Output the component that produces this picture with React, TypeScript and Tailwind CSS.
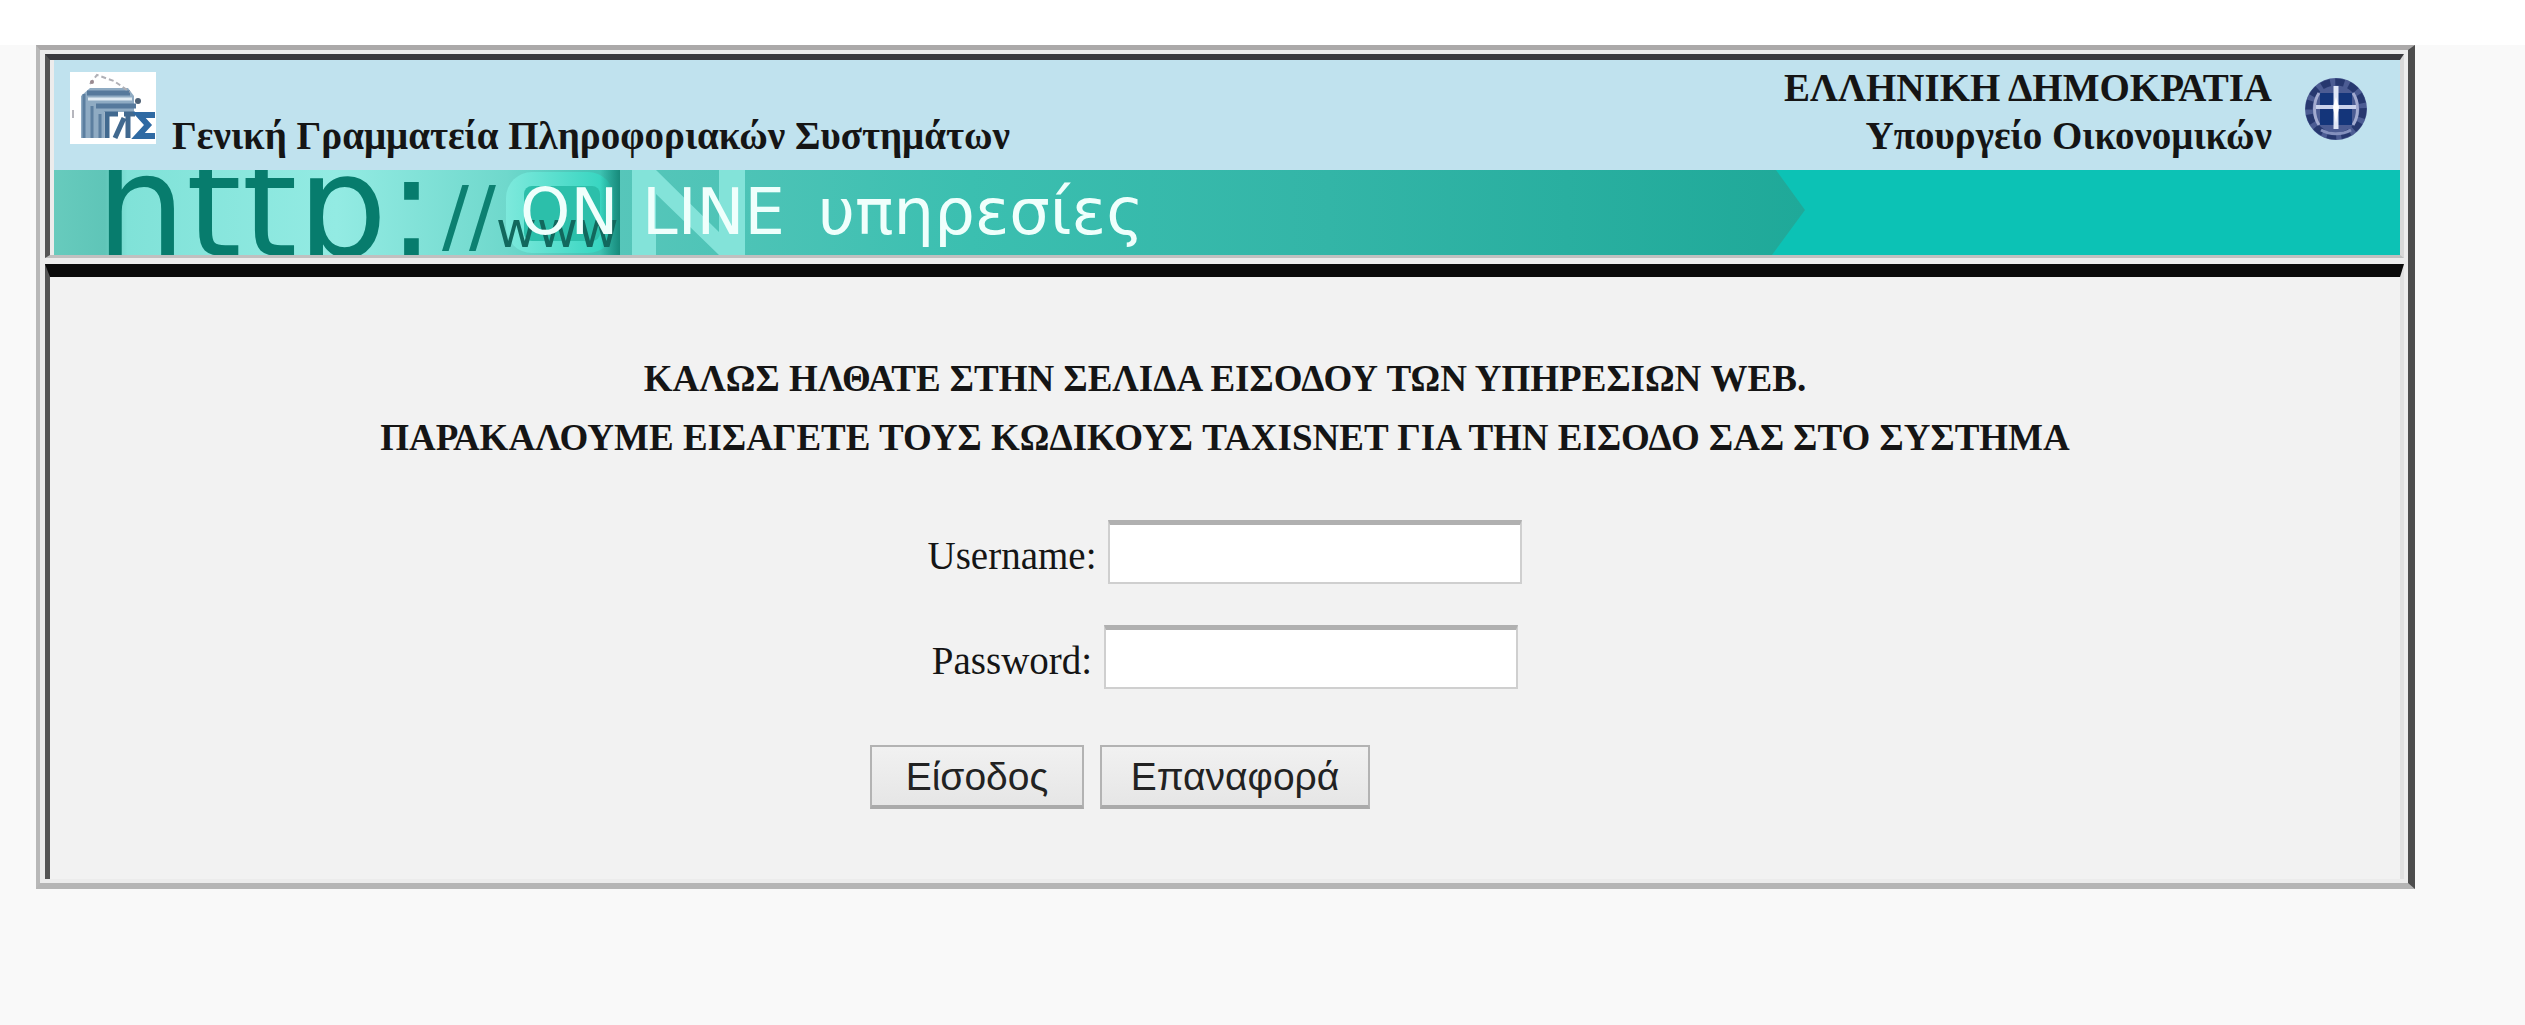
function AgencyLogo() {
  return (
    <svg className="h-[72px] w-[86px] shrink-0 bg-white" viewBox="0 0 86 72" role="img" aria-label="ΓΓΠΣ">
      <path d="M11 66V24L20 16H58L64 24V40H34V66Z" fill="#8fabc3" />
      <path d="M17 21H60M26 34H66" stroke="#56799c" strokeWidth="5" />
      <path d="M18 27H62" stroke="#dfeaf2" strokeWidth="3" />
      <path d="M14 22V66M22 34V66M30 42V66" stroke="#5c7fa0" strokeWidth="3" />
      <path d="M20 12L27 3L44 9L60 20" stroke="#b0b0b6" strokeWidth="2" strokeDasharray="5 3" fill="none" />
      <circle cx="68" cy="29" r="3" fill="#4e6175" />
      <circle cx="22" cy="10" r="2" fill="#9a8a90" />
      <path d="M3 38V46" stroke="#b6b6bd" strokeWidth="2" />
      <path d="M37 66V42H48M45 66L54 46M58 42V66M54 42H65" stroke="#41698f" strokeWidth="5" fill="none" />
      <path d="M85 43H69L78 53L68 64H85" stroke="#2f6aa3" strokeWidth="6" fill="none" />
    </svg>
  );
}

function StateEmblem() {
  return (
    <svg className="mt-[5px] size-16 shrink-0" viewBox="0 0 64 64" role="img" aria-label="Εθνόσημο">
      <circle cx="32" cy="32" r="31" fill="#4c5c93" />
      <circle cx="32" cy="32" r="27" fill="none" stroke="#27386f" strokeWidth="7" strokeDasharray="9 5" />
      <path d="M16 16H48V48H16Z" fill="#14357a" />
      <path d="M15 16C9 25 9 39 15 48M49 16C55 25 55 39 49 48" fill="none" stroke="#a3abd0" strokeWidth="3" />
      <path d="M17 53C26 58 38 58 47 53" fill="none" stroke="#8490bd" strokeWidth="3" />
      <path d="M32 9V52" stroke="#dfe6f6" strokeWidth="5" />
      <path d="M12 30H52" stroke="#c9d2ec" strokeWidth="4" />
      <path d="M32 20L35 30L32 46L29 30Z" fill="#ffffff" />
    </svg>
  );
}

function BannerArt() {
  return (
    <svg className="absolute top-0 left-0 h-full w-[1752px]" viewBox="0 0 1752 85" aria-hidden="true">
      <defs>
        <linearGradient id="glow" x1="0" x2="1">
          <stop offset="0" stopColor="#67cbbd" />
          <stop offset="0.09" stopColor="#5fc5b8" />
          <stop offset="0.13" stopColor="#80e2d8" />
          <stop offset="0.5" stopColor="#93ebe3" />
          <stop offset="0.8" stopColor="#6fd8cc" />
          <stop offset="1" stopColor="#35bfae" />
        </linearGradient>
        <linearGradient id="bubble" x1="0" x2="1">
          <stop offset="0" stopColor="#7de9dc" />
          <stop offset="1" stopColor="#2fd3bd" />
        </linearGradient>
        <linearGradient id="edge" x1="0" x2="1">
          <stop offset="0" stopColor="#178a7b" stopOpacity="0" />
          <stop offset="1" stopColor="#178a7b" />
        </linearGradient>
        <linearGradient id="sweep" x1="0" x2="1">
          <stop offset="0" stopColor="#57c6ba" />
          <stop offset="0.3" stopColor="#3bbfb0" />
          <stop offset="0.6" stopColor="#33b5a7" />
          <stop offset="1" stopColor="#1fa999" />
        </linearGradient>
      </defs>
      <path d="M560 0H1722L1751 40L1718 85H560Z" fill="url(#sweep)" />
      <rect width="566" height="85" fill="url(#glow)" />
      <rect x="452" y="2" width="108" height="81" rx="26" fill="url(#bubble)" />
      <rect x="470" y="16" width="76" height="55" rx="8" fill="#2cbfaa" />
      <rect x="546" width="20" height="85" fill="url(#edge)" />
      <text x="42" y="86" fontFamily="DejaVu Sans" fontSize="142" fill="#077c6d">http:</text>
      <text x="388" y="74" fontFamily="DejaVu Sans" fontSize="80" fill="#0c8071">//</text>
      <text x="442" y="77" fontFamily="DejaVu Sans" fontSize="50" fill="#12685d">www</text>
      <path d="M578 0H602L665 62V0H691V85H665L602 24V85H578Z" fill="#83e3d9" />
    </svg>
  );
}

const field =
  "h-16 w-[414px] border-2 border-t-[5px] border-[#cfcfcf] border-t-[#b0b0b0] bg-white px-2 text-[36px] outline-none";
const button =
  "h-16 border-2 border-b-4 border-[#b3b3b3] border-b-[#aaaaaa] bg-linear-to-b from-[#f1f1f1] to-[#e6e6e6] font-['Liberation_Sans',sans-serif] text-[39px] leading-none text-[#222]";

export default function App() {
  return (
    <div className="min-h-screen bg-[#f9f9f9] font-['Liberation_Serif',serif] text-[#151515]">
      <div className="h-[45px] bg-white" />
      <div className="mr-[110px] ml-9 border-t-[5px] border-r-[7px] border-b-[6px] border-l-4 border-t-[#aba9a9] border-r-[#4d4d4d] border-b-[#b5b5b5] border-l-[#b8b8b8] bg-[#ececec] pt-1 pr-1 pb-1 pl-[5px]">
        <header className="border-t-[6px] border-r-4 border-b-[3px] border-l-[5px] border-t-[#3a3a3e] border-r-[#d8d8d8] border-b-[#c0c0c0] border-l-[#555] pl-1">
          <div className="flex h-[110px] items-start bg-[#c0e2ee] pt-3 pr-8 pl-4">
            <AgencyLogo />
            <p className="mt-10 ml-4 text-[39px] leading-[48px] font-bold whitespace-nowrap">
              Γενική Γραμματεία Πληροφοριακών Συστημάτων
            </p>
            <div className="-mt-2 ml-auto pr-8 text-right text-[39px] leading-[48px] font-bold whitespace-nowrap">
              <p>ΕΛΛΗΝΙΚΗ ΔΗΜΟΚΡΑΤΙΑ</p>
              <p>Υπουργείο Οικονομικών</p>
            </div>
            <StateEmblem />
          </div>
          <div className="relative h-[85px] bg-[#0cc2b5]">
            <BannerArt />
            <h1 className="relative flex pl-[466px] font-['DejaVu_Sans',sans-serif] text-[64px] leading-[85px] font-normal text-[#effffc]">
              <span className="w-[122px]">ON</span>
              <span className="w-[176px]">LINE</span>
              <span>υπηρεσίες</span>
            </h1>
          </div>
        </header>
        <main className="mt-[6px] flex flex-col items-center border-t-[13px] border-r-4 border-l-[5px] border-t-[#0b0b0b] border-r-[#e0e0e0] border-l-[#555] bg-[#f2f2f2] pt-[72px] pb-[70px]">
          <div className="text-center text-[37px] leading-[59px] font-bold whitespace-nowrap">
            <p>ΚΑΛΩΣ ΗΛΘΑΤΕ ΣΤΗΝ ΣΕΛΙΔΑ ΕΙΣΟΔΟΥ ΤΩΝ ΥΠΗΡΕΣΙΩΝ WEB.</p>
            <p>ΠΑΡΑΚΑΛΟΥΜΕ ΕΙΣΑΓΕΤΕ ΤΟΥΣ ΚΩΔΙΚΟΥΣ TAXISNET ΓΙΑ ΤΗΝ ΕΙΣΟΔΟ ΣΑΣ ΣΤΟ ΣΥΣΤΗΜΑ</p>
          </div>
          <form className="mt-[53px] flex flex-col items-center text-[39px] leading-[56px]">
            <div className="flex items-end gap-3">
              <label htmlFor="username">Username:</label>
              <input id="username" name="username" type="text" className={field} />
            </div>
            <div className="mt-[41px] flex items-end gap-3">
              <label htmlFor="password">Password:</label>
              <input id="password" name="password" type="password" className={field} />
            </div>
            <div className="mt-14 flex gap-4 pr-[210px]">
              <button type="submit" className={`${button} w-[214px]`}>Είσοδος</button>
              <button type="reset" className={`${button} w-[270px]`}>Επαναφορά</button>
            </div>
          </form>
        </main>
      </div>
    </div>
  );
}
